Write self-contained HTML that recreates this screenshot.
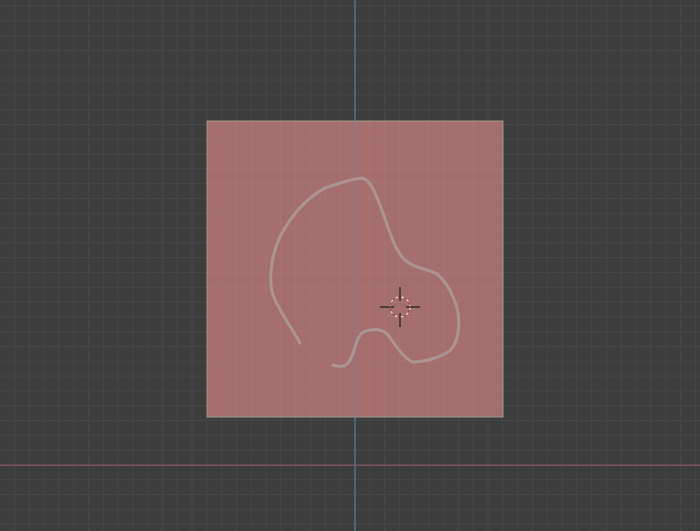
<!DOCTYPE html>
<html><head><style>html,body{margin:0;padding:0;background:#3d3d3d;overflow:hidden}</style></head>
<body>
<svg width="700" height="531" viewBox="0 0 700 531" xmlns="http://www.w3.org/2000/svg" style="display:block">
<defs>
<pattern id="g" x="354.5" y="464.5" width="14.8" height="14.8" patternUnits="userSpaceOnUse">
<path d="M0 0H14.8M0 0V14.8" stroke="#4b4b4b" stroke-width="1.2" fill="none"/>
</pattern>
<pattern id="g2" x="354.5" y="464.5" width="14.8" height="14.8" patternUnits="userSpaceOnUse">
<path d="M0 0H14.8M0 0V14.8" stroke="#ab7676" stroke-width="1" fill="none"/>
</pattern>
</defs>
<rect width="700" height="531" fill="#3d3d3d"/>
<rect width="700" height="531" fill="url(#g)"/>
<rect x="0" y="464.5" width="700" height="1.5" fill="#80535c"/>
<rect x="354.3" y="0" width="1.5" height="531" fill="#56708f"/>
<rect x="207" y="121" width="296" height="296" fill="#a56e6e"/>
<rect x="207" y="121" width="296" height="296" fill="url(#g2)"/>
<rect x="207" y="121" width="296" height="296" fill="none" stroke="#9a9a88" stroke-width="1"/>
<rect x="354.5" y="121" width="1" height="296" fill="#8a7a92"/>
<path d="M300 343 C292 328 278 310 272 292 C268 270 274 245 285 228 C296 210 310 196 325 188 C340 183 352 179 362 178 C370 180 374 190 380 205 C388 225 392 245 403 258 C412 268 425 268 437 274 C447 282 455 298 458 312 C460 328 458 345 448 352 C438 358 424 362 412 362 C402 356 396 346 388 335 C382 328 370 328 362 333 C355 340 355 352 350 360 C346 368 340 367 333 365" fill="none" stroke="#ad9493" stroke-width="3" stroke-linecap="round" stroke-linejoin="round"/>
<circle cx="400" cy="307" r="10" fill="none" stroke="#e0d0d0" stroke-width="1.3" stroke-dasharray="3 3"/>
<circle cx="400" cy="307" r="10" fill="none" stroke="#a84848" stroke-width="1.3" stroke-dasharray="3 3" stroke-dashoffset="3"/>
<path d="M400 287V301M400 313V327M380 307H394M406 307H420" stroke="#3a2a2a" stroke-width="1.5"/>
</svg>
</body></html>
